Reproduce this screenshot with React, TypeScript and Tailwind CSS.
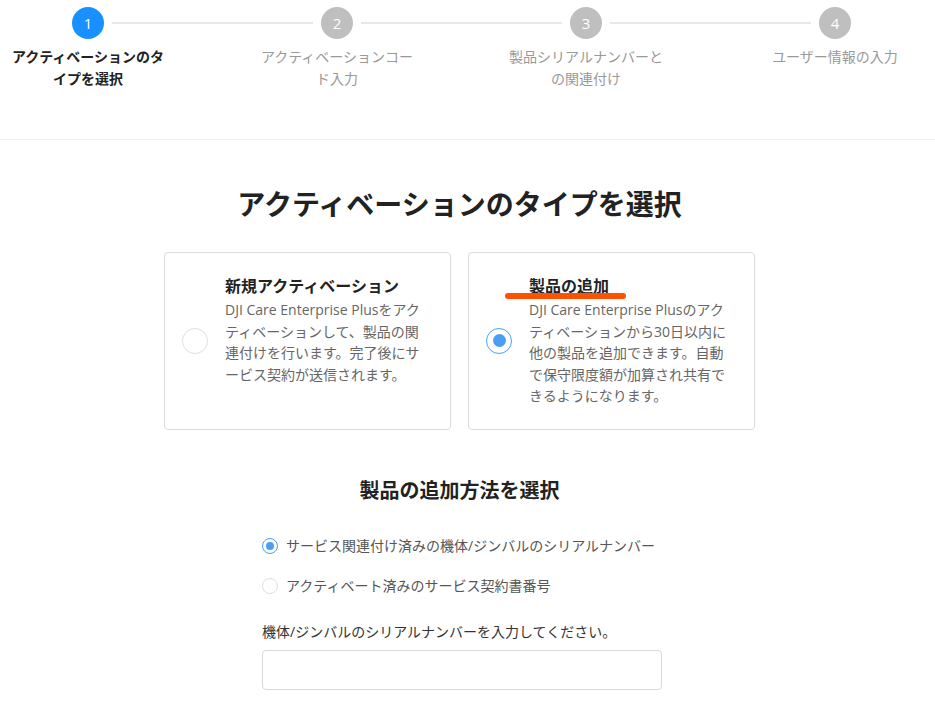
const font = { fontFamily: '"Open Sans", "Noto Sans CJK JP", sans-serif' };

const steps = [
  { n: 1, lines: ["アクティベーションのタ", "イプを選択"], active: true },
  { n: 2, lines: ["アクティベーションコー", "ド入力"] },
  { n: 3, lines: ["製品シリアルナンバーと", "の関連付け"] },
  { n: 4, lines: ["ユーザー情報の入力"] },
];

function Stepper() {
  return (
    <div className="grid grid-cols-[176px_176px_176px_176px] gap-x-[73px] pt-[7px] h-[139px]">
      {steps.map((s, i) => (
        <div key={s.n} className="relative flex flex-col items-center">
          <div
            className={`flex h-8 w-8 items-center justify-center rounded-full text-[15px] text-white ${
              s.active ? "bg-[#1890ff]" : "bg-[#bfbfbf]"
            }`}
          >
            {s.n}
          </div>
          {i < steps.length - 1 && (
            <div className="absolute left-[112px] top-[15px] h-[2px] w-[201px] bg-[#e8e8e8]" />
          )}
          <div
            className={`mt-[7px] text-center text-[14px] leading-[22px] ${
              s.active ? "font-bold text-[#222]" : "text-[#999]"
            }`}
          >
            {s.lines.map((l) => (
              <div key={l}>{l}</div>
            ))}
          </div>
        </div>
      ))}
    </div>
  );
}

function Radio({ checked, size = "lg" }: { checked?: boolean; size?: "lg" | "sm" }) {
  if (size === "lg") {
    return (
      <div
        className={`flex h-[26px] w-[26px] shrink-0 items-center justify-center rounded-full border-[1.5px] ${
          checked ? "border-[#4a9ff5]" : "border-[#dcdfe6]"
        }`}
      >
        {checked && <div className="h-[13px] w-[13px] rounded-full bg-[#4a9ff5]" />}
      </div>
    );
  }
  return (
    <div
      className={`flex h-4 w-4 shrink-0 items-center justify-center rounded-full border ${
        checked ? "border-[#4a9ff5]" : "border-[#dcdfe6]"
      }`}
    >
      {checked && <div className="h-2 w-2 rounded-full bg-[#4a9ff5]" />}
    </div>
  );
}

function Card({
  title,
  lines,
  checked,
  mark,
}: {
  title: string;
  lines: string[];
  checked?: boolean;
  mark?: boolean;
}) {
  return (
    <div className="flex w-[287px] items-center rounded-[4px] border border-[#dcdcdc] pl-[17px] pr-4 py-[22px]">
      <Radio checked={checked} />
      <div className="ml-[17px] self-start">
        <div className="relative text-[16px] font-bold leading-[22px] text-[#222]">
          {title}
          {mark && (
            <div className="absolute left-[-24px] top-[18px] h-[6px] w-[121px] rounded-full bg-[#ff5100]" />
          )}
        </div>
        <div className="mt-[2px] text-[14px] leading-[21.5px] text-[#666]">
          {lines.map((l) => (
            <div key={l} className="whitespace-nowrap">
              {l}
            </div>
          ))}
        </div>
      </div>
    </div>
  );
}

export default function App() {
  return (
    <div className="min-h-[704px] bg-white" style={font}>
      <Stepper />
      <div className="h-px bg-[#f0f0f0]" />
      <div className="w-[919px]">
        <h1 className="mt-[44px] text-center text-[28px] font-bold leading-[40px] text-[#222]">
          アクティベーションのタイプを選択
        </h1>
        <div className="mt-[28px] flex justify-center gap-[17px]">
          <Card
            title="新規アクティベーション"
            lines={[
              "DJI Care Enterprise Plusをアク",
              "ティベーションして、製品の関",
              "連付けを行います。完了後にサ",
              "ービス契約が送信されます。",
            ]}
          />
          <Card
            title="製品の追加"
            checked
            mark
            lines={[
              "DJI Care Enterprise Plusのアク",
              "ティベーションから30日以内に",
              "他の製品を追加できます。自動",
              "で保守限度額が加算され共有で",
              "きるようになります。",
            ]}
          />
        </div>
        <h2 className="mt-[46px] text-center text-[20px] font-bold leading-[30px] text-[#222]">
          製品の追加方法を選択
        </h2>
        <div className="ml-[262px] mt-[29px] w-[400px]">
          <label className="flex items-center gap-2 text-[14px] leading-[22px] text-[#555]">
            <Radio checked size="sm" />
            サービス関連付け済みの機体/ジンバルのシリアルナンバー
          </label>
          <label className="mt-[18px] flex items-center gap-2 text-[14px] leading-[22px] text-[#555]">
            <Radio size="sm" />
            アクティベート済みのサービス契約書番号
          </label>
          <div className="mt-[24px] text-[14px] leading-[22px] text-[#333]">
            機体/ジンバルのシリアルナンバーを入力してください。
          </div>
          <input
            className="mt-[7px] h-10 w-[400px] rounded-[4px] border border-[#d9d9d9] px-3 text-[14px] outline-none"
            type="text"
          />
        </div>
      </div>
    </div>
  );
}
